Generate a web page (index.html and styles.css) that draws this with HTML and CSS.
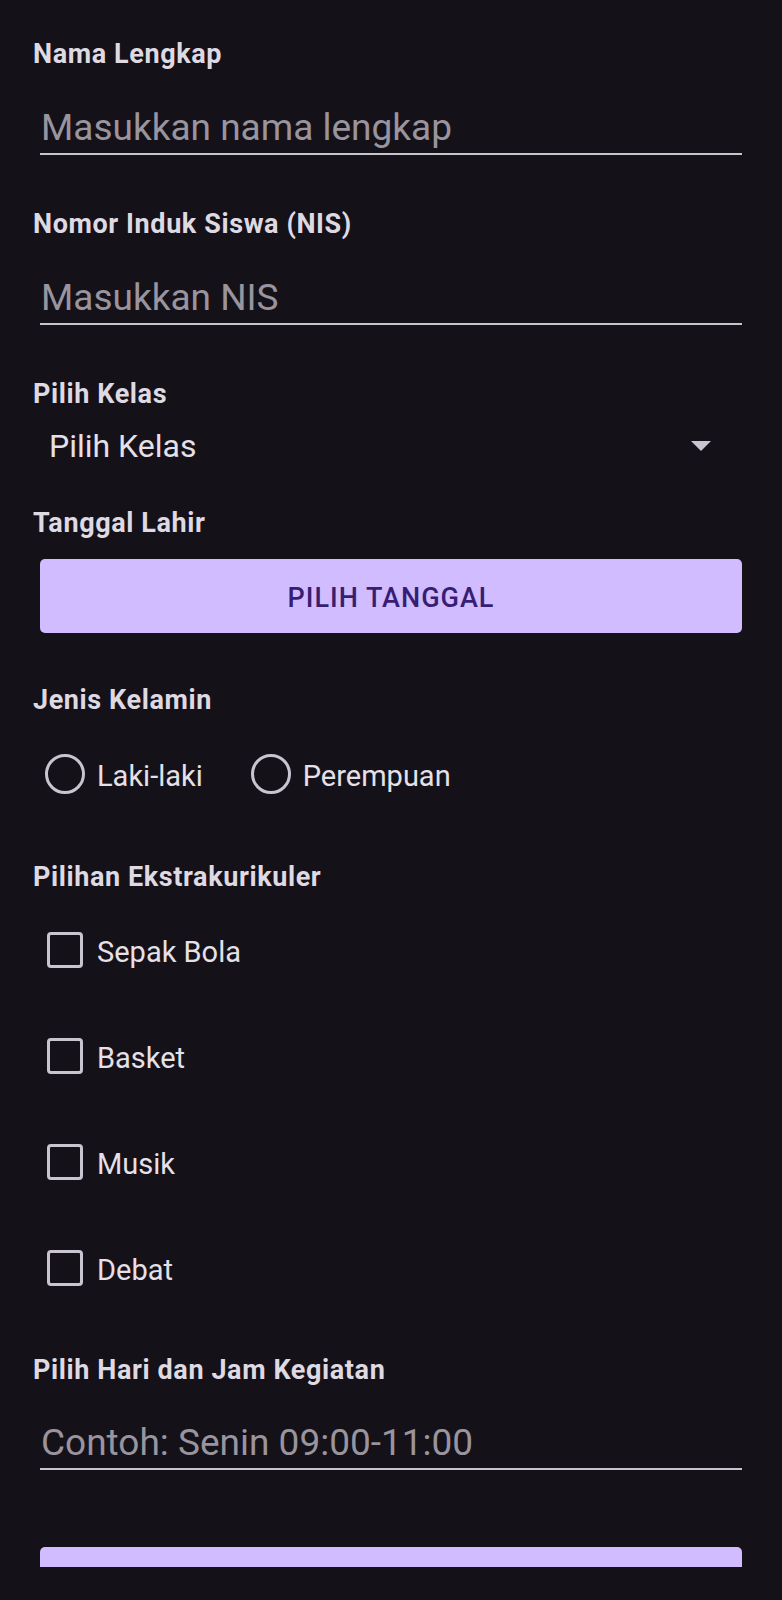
FILE: index.html
```html
<!DOCTYPE html>
<html lang="id">
<head>
<meta charset="utf-8">
<title>Form Pendaftaran</title>
<link rel="stylesheet" href="styles.css">
</head>
<body>
<div class="screen">
  <form class="form">
    <div class="label l1">Nama Lengkap</div>
    <div class="field"><span class="placeholder">Masukkan nama lengkap</span></div>

    <div class="label l-next">Nomor Induk Siswa (NIS)</div>
    <div class="field"><span class="placeholder">Masukkan NIS</span></div>

    <div class="label l-next">Pilih Kelas</div>
    <div class="spinner">
      <span class="spinner-text">Pilih Kelas</span>
      <span class="arrow"></span>
    </div>

    <div class="label l-after-spinner">Tanggal Lahir</div>
    <button type="button" class="btn date-btn">PILIH TANGGAL</button>

    <div class="label l-after-btn">Jenis Kelamin</div>
    <div class="radio-group">
      <label class="radio"><span class="ring"></span><span class="opt-text">Laki-laki</span></label>
      <label class="radio"><span class="ring"></span><span class="opt-text">Perempuan</span></label>
    </div>

    <div class="label l-after-radio">Pilihan Ekstrakurikuler</div>
    <div class="check-group">
      <label class="check"><span class="box"></span><span class="opt-text">Sepak Bola</span></label>
      <label class="check"><span class="box"></span><span class="opt-text">Basket</span></label>
      <label class="check"><span class="box"></span><span class="opt-text">Musik</span></label>
      <label class="check"><span class="box"></span><span class="opt-text">Debat</span></label>
    </div>

    <div class="label l-after-check">Pilih Hari dan Jam Kegiatan</div>
    <div class="field f-last"><span class="placeholder">Contoh: Senin 09:00-11:00</span></div>

    <button type="button" class="btn submit-btn" aria-label="Daftar"></button>
  </form>
</div>
</body>
</html>
```
FILE: styles.css
```css
html, body {
  margin: 0;
  padding: 0;
  background: #141218;
}
body {
  font-family: Roboto, "Noto Sans", "Liberation Sans", sans-serif;
  color: #e6e0e9;
  width: 782px;
  height: 1600px;
}
.screen {
  height: 1567px;
  overflow: hidden;
}
.form {
  display: flex;
  flex-direction: column;
  padding: 0 40px 0 33px;
}
.label {
  font-size: 27px;
  font-weight: 700;
  line-height: 30px;
  letter-spacing: 0.6px;
  color: #dfd9e2;
}
.l1 { margin-top: 39px; }
.l-next { margin-top: 54.6px; }
.l-after-spinner { margin-top: 42px; }
.l-after-btn { margin-top: 52px; }
.l-after-radio { margin-top: 68px; }
.l-after-check { margin-top: 69px; }

.field {
  margin: 34.5px 0 0 7px;
  padding: 0 0 5.15px 1px;
  border-bottom: 2px solid #c8c3cc;
  height: 44px;
  line-height: 48px;
}
.f-last {
  margin-top: 34px;
  padding-bottom: 4.5px;
}
.placeholder {
  font-size: 37px;
  color: #99949e;
}
.spinner {
  margin: 17px 0 0 7px;
  padding: 0 31px 0 9px;
  height: 40px;
  line-height: 40px;
  display: flex;
  justify-content: space-between;
  align-items: center;
}
.spinner-text {
  font-size: 32px;
  color: #e6e0e9;
}
.arrow {
  width: 0;
  height: 0;
  border-left: 10.5px solid transparent;
  border-right: 10.5px solid transparent;
  border-top: 10px solid #cac4d0;
}
.btn {
  margin: 21px 0 0 7px;
  height: 74px;
  border: none;
  border-radius: 5px;
  background: #d0bcff;
  color: #381e72;
  font-family: Roboto, "Noto Sans", "Liberation Sans", sans-serif;
  font-size: 27px;
  font-weight: 500;
  letter-spacing: 1px;
  padding: 4px 0 0 0;
  cursor: pointer;
}
.submit-btn {
  margin-top: 77.5px;
  flex-shrink: 0;
}
.radio-group {
  display: flex;
  margin-top: 39px;
  padding-left: 12px;
  gap: 48px;
}
.radio, .check {
  display: flex;
  align-items: center;
  height: 40px;
}
.ring {
  box-sizing: border-box;
  width: 40px;
  height: 40px;
  border: 3.5px solid #cac4d0;
  border-radius: 50%;
  flex-shrink: 0;
}
.opt-text {
  font-size: 29px;
  line-height: 40px;
  color: #e6e0e9;
  padding-top: 3px;
}
.radio .opt-text { margin-left: 12px; }
.check-group {
  display: flex;
  flex-direction: column;
  margin-top: 40px;
  padding-left: 14px;
  gap: 70px;
}
.check { height: 36px; }
.box {
  box-sizing: border-box;
  width: 36px;
  height: 36px;
  border: 3.5px solid #cac4d0;
  border-radius: 4px;
  flex-shrink: 0;
}
.check .opt-text { margin-left: 14px; }
```
